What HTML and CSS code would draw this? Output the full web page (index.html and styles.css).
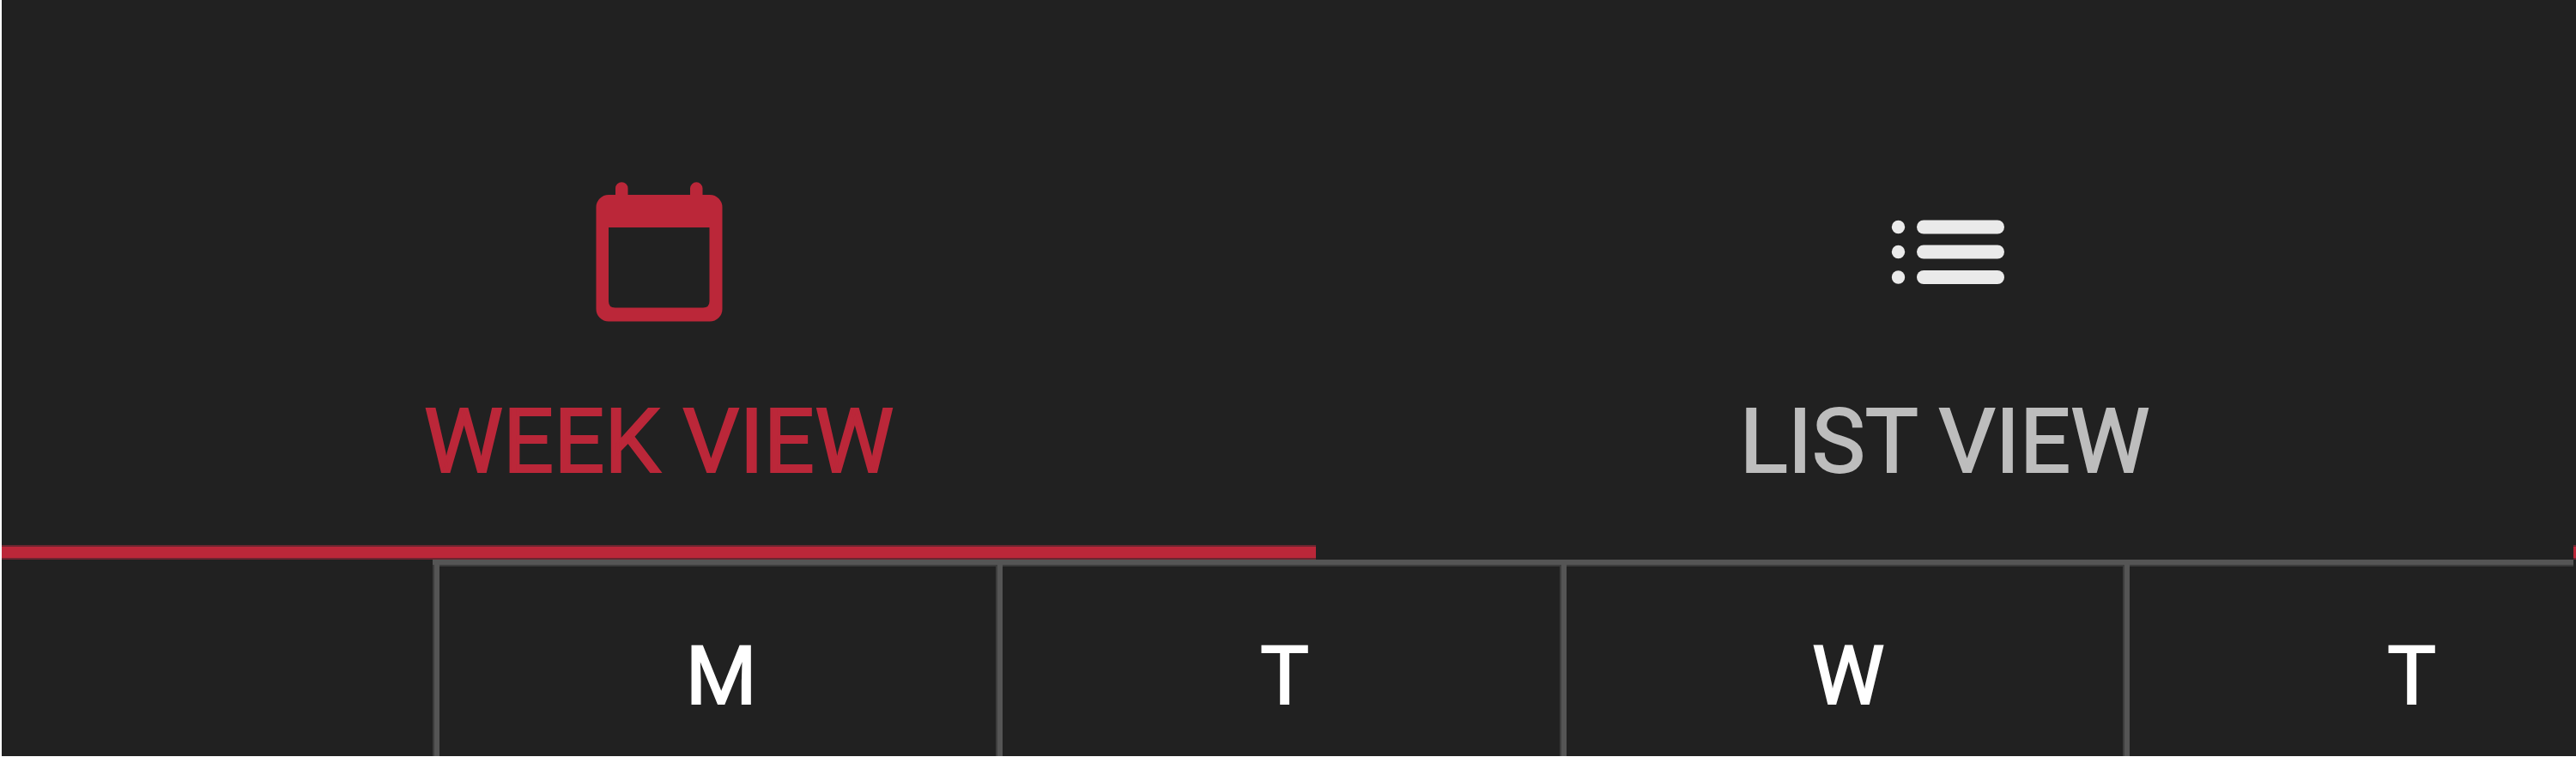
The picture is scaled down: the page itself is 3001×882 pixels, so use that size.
FILE: index.html
```
<!DOCTYPE html>
<html lang="en">
<head>
<meta charset="utf-8">
<title>Week view</title>
<link rel="stylesheet" href="styles.css">
</head>
<body>
<main class="schedule">
  <div class="tabs" role="tablist">
    <button class="tab tab-week active" type="button" role="tab" aria-selected="true">
      <svg class="icon" viewBox="0 0 148 163" width="148" height="163" aria-hidden="true">
        <path fill="currentColor" fill-rule="evenodd" d="M23 15V7.500A7.250 7.250 0 0 1 37.500 7.500V15H110V7.500A7.250 7.250 0 0 1 124.500 7.500V15H133A14.500 14.500 0 0 1 147.500 29.500V148A14.500 14.500 0 0 1 133 162.500H15A14.500 14.500 0 0 1 .5 148V29.500A14.500 14.500 0 0 1 15 15ZM15 53V139Q15 146.500 22.500 146.500H125Q132.500 146.500 132.500 139V53Z"/>
      </svg>
      <span class="label">WEEK VIEW</span>
    </button>
    <button class="tab tab-list" type="button" role="tab" aria-selected="false">
      <svg class="icon list-icon" viewBox="-8 0 139 163" width="139" height="163" aria-hidden="true">
        <g fill="currentColor">
          <circle cx="7.500" cy="52.500" r="7.700"/>
          <circle cx="7.500" cy="81.500" r="7.700"/>
          <circle cx="7.500" cy="111" r="7.700"/>
          <rect x="29" y="44.500" width="102" height="16" rx="8"/>
          <rect x="29" y="73.500" width="102" height="16" rx="8"/>
          <rect x="29" y="103" width="102" height="16" rx="8"/>
        </g>
      </svg>
      <span class="label">LIST VIEW</span>
    </button>
    <div class="tab-edge active" aria-hidden="true"></div>
  </div>
  <div class="week">
    <table class="days">
      <thead>
        <tr><td class="time"></td><th scope="col">M</th><th scope="col">T</th><th scope="col">W</th><th scope="col">T</th></tr>
      </thead>
    </table>
  </div>
</main>
</body>
</html>
```
FILE: styles.css
```
* { box-sizing: border-box; }
html { background: #fff; }
body {
  margin: 0;
  padding: 0 0 1px 2px;
  font-family: Roboto, "Liberation Sans", sans-serif;
}
.schedule {
  background: #212121;
  overflow: hidden;
}
.tabs { display: flex; }
.tab {
  display: flex;
  flex-direction: column;
  align-items: center;
  gap: 78px;
  min-width: 0;
  padding: 212px 0 75px;
  border: 0;
  background: none;
  color: #bdbdbd;
  font: inherit;
  cursor: pointer;
}
.tab-week { flex: 1531; }
.tab-list { flex: 1465; }
.tab-edge { flex: 0 0 3px; }
.icon { display: block; }
.list-icon { color: #eaeaea; }
.label {
  font-size: 104px;
  line-height: 124px;
  font-weight: 400;
  white-space: nowrap;
  -webkit-text-stroke: 2px currentColor;
}
.active {
  color: #bb2739;
  background: linear-gradient(to top, #6b2530 2px, #bb2739 2px, #bb2739 15px, #6b2530 15px, #6b2530 17px, transparent 17px);
}
.week {
  margin-right: 3px;
  overflow: hidden;
}
.days {
  width: 104.4%;
  table-layout: fixed;
  border-collapse: separate;
  border-spacing: 0;
}
.time { width: 16.05%; }
.days th {
  height: 229px;
  padding: 42px 0 0 16px;
  background:
    linear-gradient(#555, #555) 2px 0 / 6px 100% no-repeat,
    linear-gradient(#555, #555) 0 0 / 100% 6px no-repeat,
    linear-gradient(#3d3d3d, #3d3d3d) 0 0 / 2px 100% no-repeat,
    linear-gradient(#3d3d3d, #3d3d3d) 0 0 / 100% 8px no-repeat;
  color: #fff;
  font-size: 95px;
  line-height: 112px;
  font-weight: 400;
  text-align: center;
  -webkit-text-stroke: 2px currentColor;
}
```
